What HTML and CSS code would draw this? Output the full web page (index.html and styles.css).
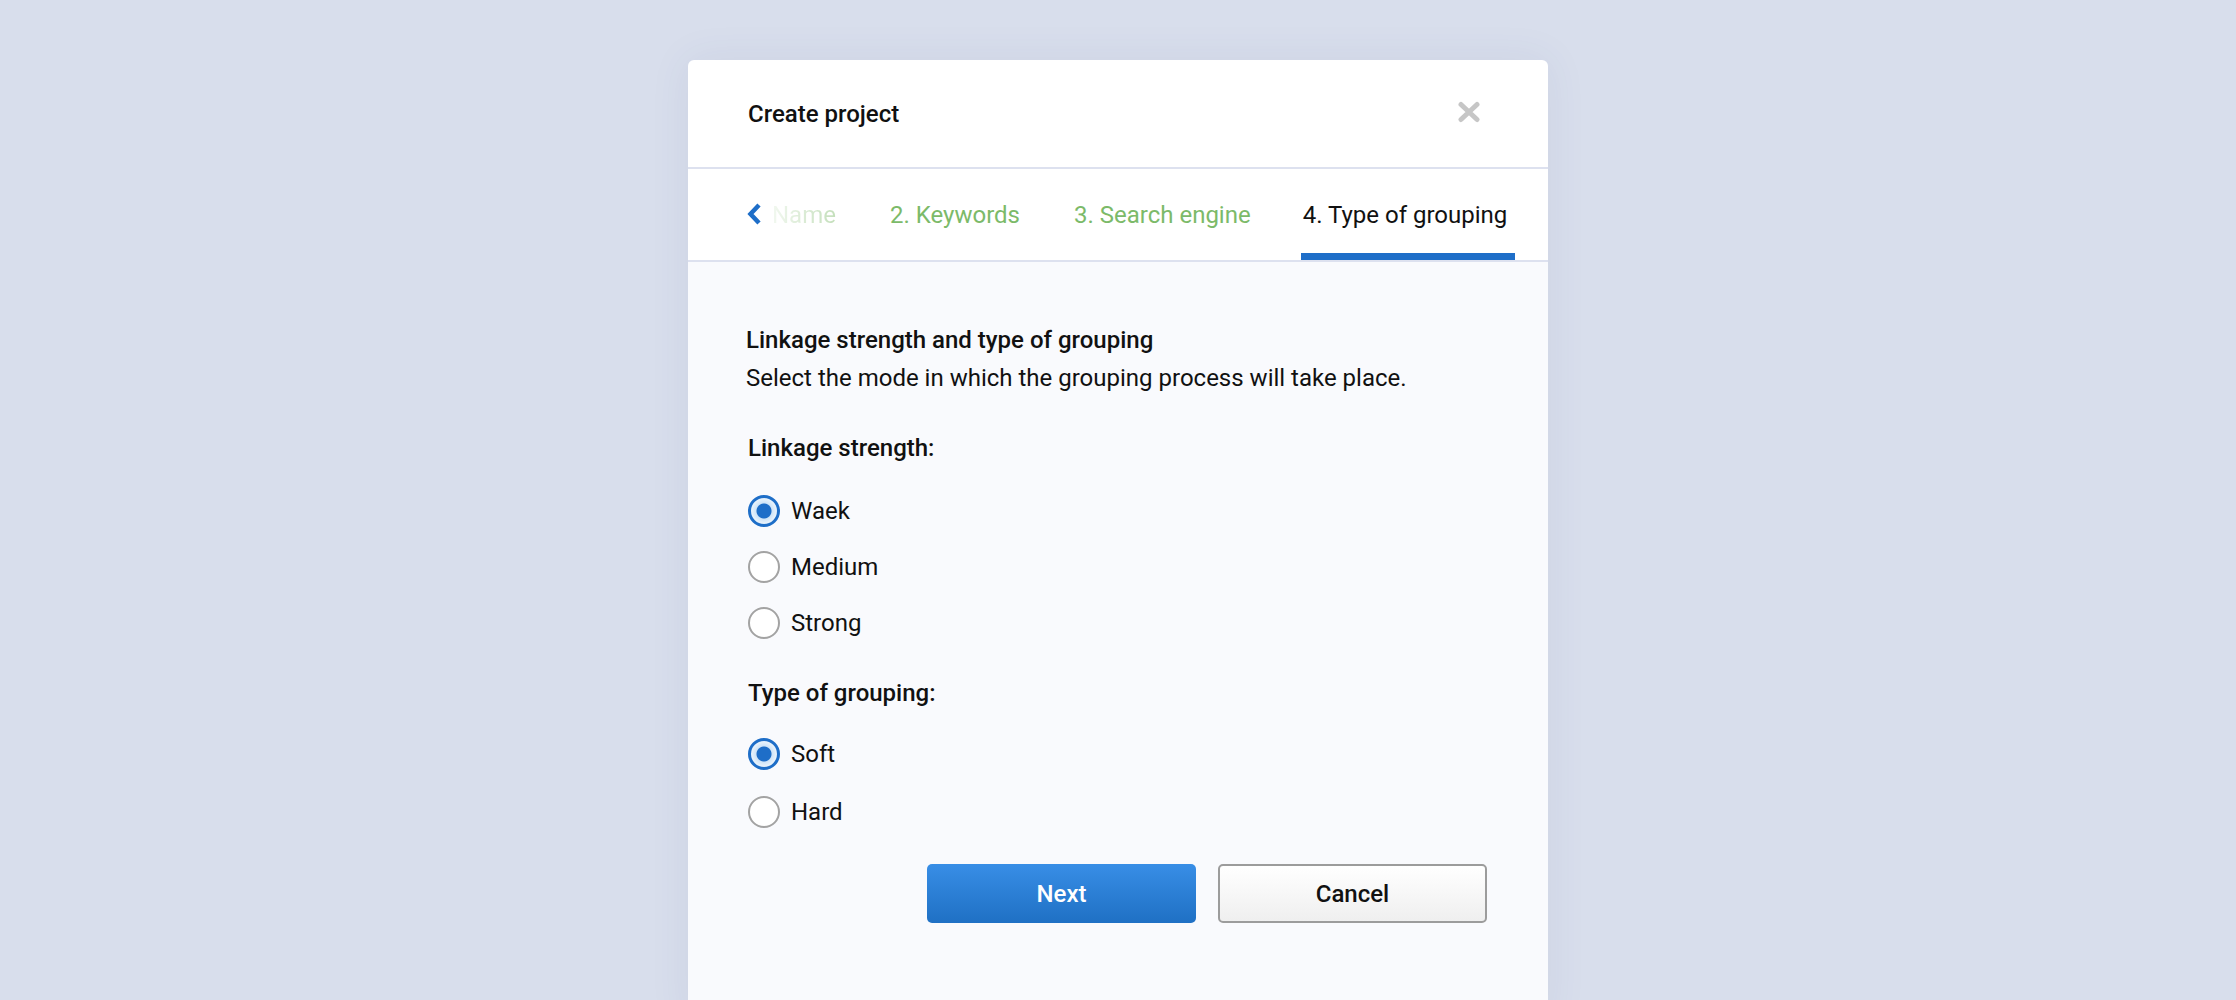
FILE: index.html
```html
<!DOCTYPE html>
<html lang="en">
<head>
<meta charset="utf-8">
<title>Create project</title>
<link rel="stylesheet" href="styles.css">
</head>
<body>
<div class="modal">
  <div class="modal-header">
    <div class="modal-title">Create project</div>
    <button class="close" aria-label="Close">
      <svg width="24" height="22" viewBox="0 0 24 22"><path d="M4 3.5L20 18.5M20 3.5L4 18.5" stroke="#c6c6c6" stroke-width="5" stroke-linecap="round" fill="none"/></svg>
    </button>
  </div>
  <div class="tabs">
    <div class="tab tab-first">
      <svg class="chev" width="16" height="24" viewBox="0 0 16 24"><path d="M13 3L4.5 12L13 21" stroke="#1e6ec8" stroke-width="4.5" fill="none"/></svg>
      <span class="fade">Name</span>
    </div>
    <div class="tab done">2. Keywords</div>
    <div class="tab done">3. Search engine</div>
    <div class="tab active">4. Type of grouping</div>
  </div>
  <div class="modal-body">
    <div class="section-title">Linkage strength and type of grouping</div>
    <div class="section-desc">Select the mode in which the grouping process will take place.</div>

    <div class="group-label">Linkage strength:</div>
    <div class="radios">
      <label class="radio"><span class="dot checked"></span>Waek</label>
      <label class="radio"><span class="dot"></span>Medium</label>
      <label class="radio"><span class="dot"></span>Strong</label>
    </div>

    <div class="group-label">Type of grouping:</div>
    <div class="radios radios-wide">
      <label class="radio"><span class="dot checked"></span>Soft</label>
      <label class="radio"><span class="dot"></span>Hard</label>
    </div>

    <div class="actions">
      <button class="btn btn-primary">Next</button>
      <button class="btn btn-secondary">Cancel</button>
    </div>
  </div>
</div>
</body>
</html>
```
FILE: styles.css
```css
* { box-sizing: border-box; }
html, body { margin: 0; padding: 0; }
body {
  background: #d8deec;
  font-family: Roboto, "Liberation Sans", Arial, sans-serif;
  color: #111;
  height: 1000px;
  overflow: hidden;
}
.modal {
  width: 860px;
  margin: 60px auto 0;
  background: #fff;
  border-radius: 6px 6px 0 0;
  box-shadow: 0 0 40px rgba(60, 80, 130, 0.08);
  overflow: hidden;
}
.modal-header {
  height: 109px;
  display: flex;
  align-items: center;
  justify-content: space-between;
  padding: 0 67px 0 60px;
  border-bottom: 2px solid #dde1ef;
}
.modal-title {
  font-size: 24px;
  font-weight: 500;
  line-height: 28px;
  margin-top: 0;
}
.close {
  border: 0;
  background: none;
  padding: 0;
  width: 24px;
  height: 22px;
  margin-top: -3px;
  display: block;
}
.close svg { display: block; }
.tabs {
  height: 93px;
  display: flex;
  align-items: flex-end;
  padding-left: 58px;
  border-bottom: 2px solid #dde1ef;
  gap: 46px;
}
.tab {
  font-size: 24px;
  line-height: 28px;
  padding: 0 4px 24px;
  border-bottom: 7px solid transparent;
  white-space: nowrap;
}
.tab-first {
  display: flex;
  align-items: center;
  gap: 10px;
  padding-left: 0;
}
.chev { display: block; margin-top: -2px; }
.fade {
  background: linear-gradient(90deg, #f2f8f0 0%, #c4dfbb 100%);
  -webkit-background-clip: text;
  background-clip: text;
  color: transparent;
}
.done { color: #7cba69; }
.active { color: #111; border-bottom-color: #1e6ec8; padding-right: 8px; padding-left: 2px; }
.modal-body {
  background: #f9fafd;
  padding: 64px 61px 80px 58px;
  min-height: 760px;
}
.section-title {
  font-size: 24px;
  font-weight: 500;
  line-height: 28px;
}
.section-desc {
  font-size: 24px;
  line-height: 28px;
  margin-top: 10px;
}
.group-label {
  font-size: 24px;
  font-weight: 500;
  line-height: 28px;
  margin-top: 42px;
  padding-left: 2px;
}
.radios + .group-label { margin-top: 40px; }
.radios {
  display: flex;
  flex-direction: column;
  gap: 24px;
  margin-top: 33px;
  padding-left: 2px;
}
.radios-wide { gap: 26px; margin-top: 31px; }
.radio {
  display: flex;
  align-items: center;
  gap: 11px;
  height: 32px;
  font-size: 24px;
  line-height: 28px;
}
.dot {
  width: 32px;
  height: 32px;
  border-radius: 50%;
  border: 2px solid #a3a3a3;
  background: #fff;
  flex: none;
}
.dot.checked {
  border: 3px solid #1e6ec8;
  background: radial-gradient(circle, #1e6ec8 0, #1e6ec8 7px, #cfe4f8 8px, #e6f1fb 12px);
}
.actions {
  display: flex;
  justify-content: flex-end;
  gap: 22px;
  margin-top: 36px;
}
.btn {
  width: 269px;
  height: 59px;
  font-family: Roboto, "Liberation Sans", Arial, sans-serif;
  font-size: 24px;
  font-weight: 500;
  border-radius: 5px;
  cursor: pointer;
}
.btn-primary {
  color: #fff;
  border: 0;
  background: linear-gradient(180deg, #388ee6 0%, #1f70c4 100%);
}
.btn-secondary {
  color: #111;
  border: 2px solid #9c9c9c;
  background: linear-gradient(180deg, #ffffff 0%, #efefef 100%);
}
```
